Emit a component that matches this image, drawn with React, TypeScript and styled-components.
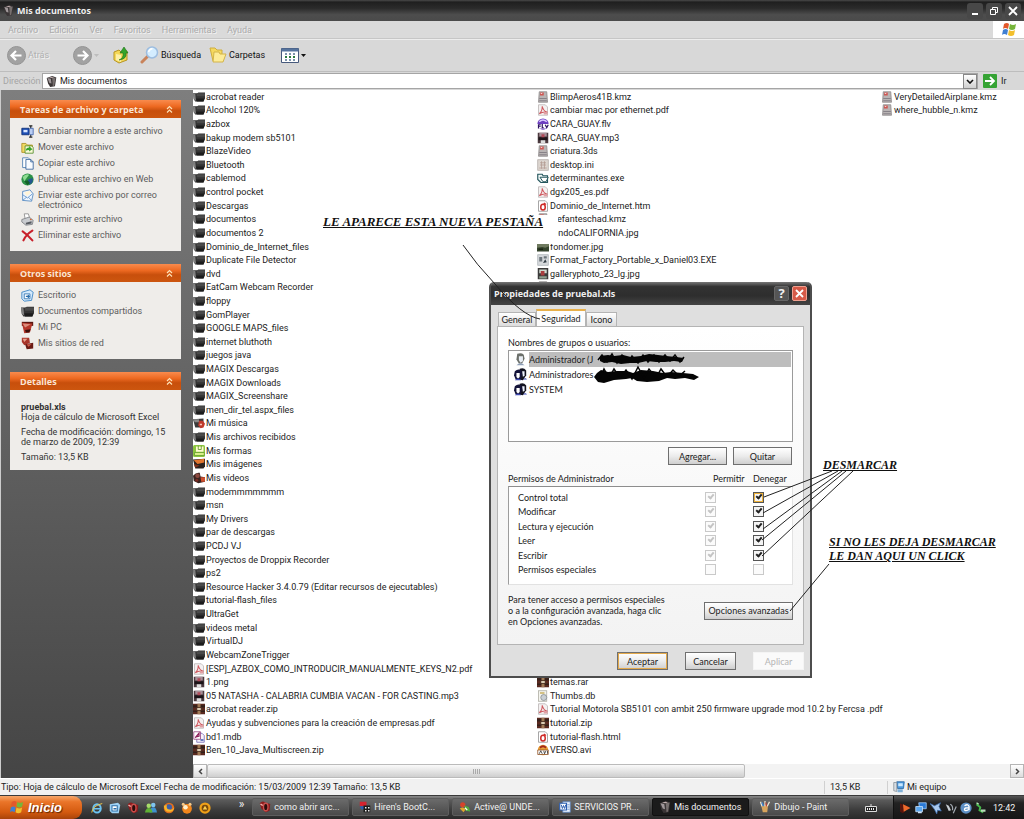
import React from 'react';
import styled, { createGlobalStyle } from 'styled-components';

const GlobalStyle = createGlobalStyle`
  *, *::before, *::after { box-sizing: border-box; }
  html, body { margin: 0; padding: 0; }
  body { font-family: Roboto, "Liberation Sans", sans-serif; font-size: 9px; color: #222; background: #fff; overflow: hidden; }
  button, input { font: inherit; color: inherit; margin: 0; padding: 0; border: 0; background: none; }
  ul { list-style: none; margin: 0; padding: 0; }
  h1, h2, p { margin: 0; font-size: inherit; }
  a { color: inherit; text-decoration: none; }
  svg { display: block; flex: none; }
`;

/* ---------- icons ---------- */

const Ico = styled.svg<{ $s: number }>`
  width: ${(p) => p.$s}px;
  height: ${(p) => p.$s}px;
`;

type IconName = keyof typeof shapes;

const shapes = {
  folder: (
    <>
      <path d="M0 3h6l1-1h9v8l-2 4H3L1 11z" fill="#343434" />
      <path d="M0 3l3 1 1 9-3-2z" fill="#808080" />
      <path d="M5 3h11v4H5z" fill="#4a4a4a" />
      <path d="M4 10h11l-1 4H5z" fill="#1c1c1c" />
    </>
  ),
  music: (
    <>
      <path d="M0 3l14-1v9l-2 3H3z" fill="#3b3b3b" />
      <path d="M1 3h7v4H2z" fill="#8a8a8a" />
      <path d="M8 5l5 0 3 4-2 5-4 1-3-4z" fill="#c0392b" />
      <path d="M9 9h3v2H9z" fill="#f2c4b8" />
    </>
  ),
  shapesDoc: (
    <>
      <rect x="0" y="0" width="16" height="16" rx="2" fill="#8cc63f" />
      <path d="M4 2h10v7H4z" fill="#fffbd0" />
      <path d="M7 1v5h4V1" stroke="#4c8a1d" fill="none" />
      <path d="M2 10h13v4H2z" fill="#d9ee8a" stroke="#5d9b28" />
    </>
  ),
  images: (
    <>
      <path d="M0 2l16-1v10l-2 3H3z" fill="#2b2320" />
      <path d="M1 3l14-2v5L6 8z" fill="#e2762f" />
      <path d="M1 8l8 2-6 3z" fill="#803018" />
    </>
  ),
  videos: (
    <>
      <path d="M0 5q4-5 9-4l1 5 6 1v6l-9 2-6-3z" fill="#3a2320" />
      <circle cx="6" cy="5" r="3" fill="#8d4a40" />
      <path d="M10 7h6v6h-5z" fill="#d0502f" />
      <circle cx="5" cy="11" r="2" fill="#7b2b22" />
    </>
  ),
  pdf: (
    <>
      <path d="M2 1h9l3 3v11H2z" fill="#f4f1f1" stroke="#b5b0b0" />
      <path d="M3 13c4-3 4-8 4-10 1 5 3 7 7 8-4-1-8 0-11 2z" fill="none" stroke="#cf5a60" strokeWidth="1.4" />
      <path d="M9 11h5v3H9z" fill="#e0a0a4" />
    </>
  ),
  media: (
    <>
      <rect x="1" y="1" width="14" height="14" fill="#4b3a3f" />
      <path d="M3 1h10v5H3z" fill="#a58f97" />
      <path d="M2 7h12v4H2z" fill="#1c1418" />
      <path d="M5 11h6v4H5z" fill="#ddd" />
      <path d="M6 3h4v4H6z" fill="#b04a58" />
    </>
  ),
  zip: (
    <>
      <rect x="0" y="1" width="16" height="14" fill="#5a2a20" />
      <path d="M0 3h16v3H0zM0 10h16v2H0z" fill="#33201a" />
      <path d="M6 1h4v14H6z" fill="#a07a56" />
      <path d="M5 6h6v4H5z" fill="#dccdb4" stroke="#3a1d12" />
    </>
  ),
  mdb: (
    <>
      <path d="M5 3h7l3 3v9H5z" fill="#f6f2fb" stroke="#6a5dae" />
      <path d="M1 1h9v10H1z" fill="#fff" stroke="#8c3a78" />
      <path d="M3 9l5-6v4q-3 1-4 0" stroke="#8b1e5a" strokeWidth="1.6" fill="none" />
      <path d="M10 12h4" stroke="#3a53a8" strokeWidth="2" />
    </>
  ),
  kmz: (
    <>
      <path d="M3 1h10l1 14H2z" fill="#b9b4b4" stroke="#8a8585" />
      <path d="M4 2h5v4H4z" fill="#cf5652" />
      <path d="M5 3h2v1H5z" fill="#fff" />
      <path d="M3 10h10M3 13h10" stroke="#77727a" />
    </>
  ),
  flv: (
    <>
      <circle cx="8" cy="8" r="7.5" fill="#6d3fc0" />
      <path d="M3 5q5-5 10 0" stroke="#d9c8ff" strokeWidth="2" fill="none" />
      <path d="M0 8h16v6H0z" fill="#fff" />
      <path d="M2 14V9h3M2 11h3M7 8v5h2M11 9l2 4 2-4" stroke="#2b1060" strokeWidth="1.6" fill="none" />
    </>
  ),
  ini: (
    <>
      <rect x="1" y="1" width="14" height="14" fill="#ddd6d0" stroke="#b0a9a4" />
      <path d="M4 5h8M4 8h8M3 12h10M6 3v10M10 3v10" stroke="#b29a90" />
    </>
  ),
  exe: (
    <>
      <path d="M1 3h6l1 2h6v9H5L1 10z" fill="#eef6f5" stroke="#23555c" strokeWidth="1.5" />
      <path d="M4 7h11l-3 6H8z" fill="#fff" stroke="#23555c" strokeWidth="1.3" />
    </>
  ),
  htm: (
    <>
      <path d="M2 1h9l3 3v11H2z" fill="#fff" stroke="#8a8a8a" />
      <ellipse cx="8" cy="9.500" rx="3" ry="3.800" fill="none" stroke="#cf2a27" strokeWidth="2" />
      <path d="M9 4l3 2" stroke="#cf2a27" strokeWidth="2" />
    </>
  ),
  photo: (
    <>
      <rect x="0" y="4" width="16" height="10" fill="#34432c" />
      <path d="M0 4h16v3l-5 2-4-1-7 1z" fill="#6f7a5f" />
      <path d="M2 10h6v2H2z" fill="#1a2414" />
    </>
  ),
  setup: (
    <>
      <rect x="1" y="1" width="14" height="14" fill="#d6d9dc" stroke="#aab0b4" />
      <path d="M3 4h4v6H3zM9 3h4v3H9z" fill="#6c757b" />
      <path d="M8 12l3-5 2 4z" fill="#2f3b43" />
    </>
  ),
  gallery: (
    <>
      <rect x="1" y="0" width="14" height="15" fill="#3b3a3a" />
      <path d="M3 2h10v5H3z" fill="#cfd9cf" />
      <path d="M5 4h5v6H5z" fill="#a93d3d" />
      <path d="M3 11h10v3H3z" fill="#8fa08f" />
    </>
  ),
  db: (
    <>
      <rect x="2" y="1" width="11" height="14" fill="#f4f4ee" stroke="#aaa99f" />
      <circle cx="9" cy="10" r="4" fill="#c9cfd4" stroke="#81888d" />
      <path d="M4 4h6" stroke="#c9b060" strokeWidth="2" />
    </>
  ),
  avi: (
    <>
      <circle cx="8" cy="8" r="7" fill="#e9a13a" />
      <path d="M1 8h14v6H1z" fill="#fff" stroke="#8b4a17" />
      <path d="M4 5q4-4 8 0" stroke="#a3271a" strokeWidth="2.4" fill="none" />
      <path d="M3 13l2-4 2 4M9 9l1 4 2-4M14 9v4" stroke="#222" fill="none" />
    </>
  ),
  rename: (
    <>
      <path d="M1 4h9v8H1z" fill="#1d4fb5" stroke="#0b2b74" />
      <path d="M3 6h5v3H3z" fill="#d9e6ff" />
      <path d="M12 1v14M10 1h4M10 15h4" stroke="#222" strokeWidth="1.4" />
      <path d="M11 4h4v8h-4" fill="#b9cdf3" stroke="#3a5fa8" />
    </>
  ),
  move: (
    <>
      <path d="M1 3h5l2 2h6v9H1z" fill="#f1d965" stroke="#a98c1e" />
      <path d="M5 6h8l2 2v7H5z" fill="#fbf9d8" stroke="#4d8a26" />
      <path d="M6 12q0-4 4-4V6l4 4-4 3v-2q-3 0-4 1z" fill="#36a52c" />
    </>
  ),
  copy: (
    <>
      <path d="M2 1h7l2 2v10H2z" fill="#fff" stroke="#4477ae" />
      <path d="M6 3h6l3 3v9H6z" fill="#f8fbff" stroke="#2b5d96" />
      <path d="M12 3v3h3" fill="none" stroke="#2b5d96" />
    </>
  ),
  globe: (
    <>
      <circle cx="8" cy="8" r="7.500" fill="#2c9147" />
      <path d="M2 5q4-5 8-3l-3 4-3 4z" fill="#8fdc92" />
      <path d="M9 8l5-2q2 5-3 8l-3-2z" fill="#23568f" />
      <path d="M4 10l4-1 3 3-3 3z" fill="#136028" />
    </>
  ),
  mail: (
    <>
      <path d="M2 3l9-2 4 5-2 9-11-1z" fill="#eef6ff" stroke="#4b82bd" />
      <path d="M2 7l6 4 6-5M2 14l5-4M13 14l-4-4" fill="none" stroke="#5b8fc7" />
      <path d="M4 4l7-2 1 3-5 4z" fill="#fff4d8" />
    </>
  ),
  printer: (
    <>
      <path d="M4 1h5l2 6H5z" fill="#fff" stroke="#888" />
      <path d="M1 8l9-3 5 4-1 5-8 1-5-4z" fill="#c9ccd0" stroke="#7b7e83" />
      <path d="M6 12l7-2v3l-7 1z" fill="#565a60" />
      <path d="M11 8h2" stroke="#d9632a" strokeWidth="1.5" />
    </>
  ),
  del: <path d="M2 3q6 4 12 11M14 2Q6 7 3 14" stroke="#c8202b" strokeWidth="2.6" fill="none" strokeLinecap="round" />,
  desktop: (
    <>
      <path d="M1 4l10-3 4 3-2 10-9 1-3-3z" fill="#d5eafc" stroke="#2f7cc0" />
      <path d="M4 6h7v6H4z" fill="#fff" stroke="#2a6fae" />
      <path d="M6 9h5M9 7v4" stroke="#2a6fae" strokeWidth="1.5" />
    </>
  ),
  pc: (
    <>
      <path d="M1 1h14v5H1z" fill="#5b1712" />
      <path d="M1 2l13 1-3 11-7 1z" fill="#b4362a" />
      <path d="M2 3l10 1-7 4z" fill="#dc8d7c" />
      <path d="M5 11l7-1-2 4H6z" fill="#3a0f0b" />
    </>
  ),
  net: (
    <>
      <path d="M1 1h9l1 6-7 3-3-4z" fill="#a8352a" />
      <path d="M2 2h6l-4 4z" fill="#e6a18f" />
      <path d="M5 9l10-2v7l-8 1z" fill="#6a1b15" />
      <path d="M7 9l6 0-4 3z" fill="#cf5a4a" />
    </>
  ),
  bin: (
    <>
      <path d="M1 3l8-3 6 2-2 13-7 1-3-5z" fill="#3a3536" />
      <path d="M2 3l5 1 1 7-3-1z" fill="#a0989a" />
      <path d="M9 3l5-1-2 12-2 1z" fill="#77706f" />
      <path d="M4 2l5-1 3 1-4 1z" fill="#c3b1b0" />
    </>
  ),
  ie: (
    <>
      <ellipse cx="8" cy="8.500" rx="5" ry="5.500" fill="none" stroke="#6cc3f2" strokeWidth="2.6" />
      <path d="M4 9h8" stroke="#6cc3f2" strokeWidth="2" />
      <path d="M1 14Q2 5 15 2" stroke="#f0c94a" strokeWidth="1.3" fill="none" />
    </>
  ),
  showDesk: (
    <>
      <path d="M1 3l11-2 3 3-2 11-9 0-3-3z" fill="#9fd2f5" />
      <path d="M4 5h7v7H4z" fill="#fff" stroke="#2b6ea8" strokeWidth="1.4" />
      <path d="M6 9h4" stroke="#2b6ea8" strokeWidth="2" />
    </>
  ),
  opera: (
    <>
      <path d="M1 3q4-4 7-1l7 2-1 9-5 2-6-5z" fill="#8e1a1c" />
      <ellipse cx="9" cy="8" rx="3" ry="5" fill="#2a0c0c" stroke="#c9504c" strokeWidth="1.8" />
      <path d="M2 4l3 2" stroke="#f0b4ae" strokeWidth="2" />
    </>
  ),
  msn: (
    <>
      <circle cx="11" cy="4" r="3" fill="#7fc4ee" />
      <path d="M6 14q1-7 5-7t5 7z" fill="#3f91cf" />
      <circle cx="5" cy="5" r="3" fill="#a8dc6a" />
      <path d="M0 14q1-6 5-6t5 6z" fill="#5fb134" />
    </>
  ),
  firefox: (
    <>
      <circle cx="8" cy="8" r="7" fill="#e2701c" />
      <circle cx="8" cy="7" r="4" fill="#3c5fa8" />
      <path d="M1 5q1 9 8 8 5 0 6-6-2 4-6 3-5 0-4-6z" fill="#f7b52b" />
    </>
  ),
  gom: (
    <>
      <circle cx="8" cy="9" r="6.500" fill="#f2861c" />
      <circle cx="3" cy="3" r="2" fill="#f7c987" />
      <circle cx="12" cy="3" r="2" fill="#f7c987" />
      <circle cx="6" cy="7" r="3" fill="#fff0cf" />
    </>
  ),
  aimp: (
    <>
      <circle cx="8" cy="8" r="7.500" fill="#f0a018" />
      <circle cx="8" cy="8" r="4.500" fill="#7a4a0c" />
      <path d="M5 10l3-5 3 5z" fill="#ffcf4d" />
    </>
  ),
  hiren: (
    <>
      <path d="M1 1h9v6H1z" fill="#d3232f" />
      <path d="M1 7h6l3 4H3z" fill="#2a5fae" />
      <path d="M6 6h9v9H6z" fill="#1b1b1b" />
      <path d="M8 8h2v2H8zM12 8h2v2h-2zM8 12h2v2H8zM12 12h2v2h-2z" fill="#eee" />
    </>
  ),
  active: (
    <>
      <circle cx="5" cy="5" r="3.500" fill="#d5432b" />
      <path d="M1 10q5-3 8 1l-3 4z" fill="#e0a52c" />
      <path d="M7 6l6 2 2 6-6-1z" fill="#4fae3b" />
      <path d="M8 9l3 3" stroke="#fff" strokeWidth="1.5" />
    </>
  ),
  word: (
    <>
      <path d="M5 1h10v14H5z" fill="#e9f1fc" stroke="#5a86c6" />
      <path d="M1 3h9v9H1z" fill="#fff" stroke="#2a5db0" strokeWidth="1.5" />
      <path d="M3 5l1.500 5L6 6l1.500 4L9 5" fill="none" stroke="#2a5db0" strokeWidth="1.300" />
      <path d="M11 5h3M11 8h3M11 11h3" stroke="#5a86c6" />
    </>
  ),
  paint: (
    <>
      <path d="M3 6l9 0-1 9H5z" fill="#d8a45c" />
      <path d="M4 7L2 1M8 7V0M11 7l3-6" stroke="#e8e2d0" strokeWidth="1.800" />
      <path d="M4 2l2 5" stroke="#3f83d0" strokeWidth="2" />
      <path d="M9 2l1 5" stroke="#cf3b2c" strokeWidth="1.500" />
    </>
  ),
  myPc: (
    <>
      <path d="M5 1h10l-1 9H6z" fill="#4d9be0" stroke="#21609e" />
      <path d="M7 3h6v4H7z" fill="#cbe8ff" />
      <path d="M1 2h4v12l-4-1z" fill="#d7dde2" stroke="#838c94" />
      <path d="M6 11h7v4H6z" fill="#7fb0d8" />
    </>
  ),
  trayPlay: (
    <>
      <path d="M0 2l12 4-8 9-4-2z" fill="#57150d" />
      <path d="M4 3l10 5-9 5z" fill="#ee6a2c" />
    </>
  ),
  trayNet: (
    <>
      <path d="M5 1h10v8H6z" fill="#2b7ad6" stroke="#a8d4ff" />
      <path d="M1 6h9v7H1z" fill="#5aa7ef" stroke="#cfe7ff" />
      <path d="M4 14h5" stroke="#cfe7ff" strokeWidth="2" />
    </>
  ),
  trayMoon: <path d="M0 2l6 3 8-4-2 5 3 6-5-1-1 5-3-6z" fill="#a9c9ef" stroke="#3b6aa8" />,
  traySound: (
    <>
      <path d="M1 3l4 2 3 6-3 1z" fill="#c7ccd1" />
      <path d="M7 3q4 2 3 8M11 15l4-9" fill="none" stroke="#a4abb3" strokeWidth="1.600" />
    </>
  ),
  trayAvast: (
    <>
      <circle cx="8" cy="8" r="7.500" fill="#5d8fc4" />
      <path d="M6 5q5-3 6 1v5M12 8q-6-1-6 2t6 0" fill="none" stroke="#fff" strokeWidth="1.800" />
    </>
  ),
  trayPlug: (
    <>
      <path d="M2 3l5 4-1 4 5 3" fill="none" stroke="#45b649" strokeWidth="2.600" />
      <path d="M8 10h6v3H8z" fill="#b8dcba" />
      <path d="M2 1l3 2" stroke="#b6e8b7" strokeWidth="2" />
    </>
  ),
  userOne: (
    <>
      <path d="M4 1q5-2 8 1l1 5-3 6H6L3 8z" fill="#6b6f6a" />
      <path d="M6 4h5v6l-3 2-2-3z" fill="#e9eef5" />
      <path d="M3 15q5-5 10 0z" fill="#8fa0b8" />
    </>
  ),
  userMany: (
    <>
      <path d="M7 1q5-2 8 2l0 6-4 6-5-1z" fill="#13131f" />
      <path d="M10 4h3v5l-2 2z" fill="#eef2ff" />
      <path d="M1 4q4-4 8-1l1 5-2 6H2L0 9z" fill="#14143a" />
      <path d="M3 6h4v5l-2 2-2-2z" fill="#fff" />
      <path d="M1 15q4-4 8 0zM11 14q3-3 5 0z" fill="#3b47b0" />
    </>
  ),
};

function Icon({ name, size = 12 }: { name: IconName; size?: number }) {
  return (
    <Ico $s={size} viewBox="0 0 16 16" aria-hidden="true">
      {shapes[name]}
    </Ico>
  );
}

const Flag = ({ size }: { size: number }) => (
  <Ico $s={size} viewBox="0 0 16 16" aria-hidden="true">
    <path d="M3 2q3-2 5 0L7 7Q4 5 2 7z" fill="#e2582b" />
    <path d="M9 2q3 2 6 0l-1 5q-3 2-6 0z" fill="#76b53a" />
    <path d="M2 8q3-2 5 0l-1 5q-3-2-5 0z" fill="#3f7fd2" />
    <path d="M8 8q3 2 6 0l-1 5q-3 2-6 0z" fill="#f3bf2c" />
  </Ico>
);

const Up = () => (
  <svg width="7" height="8" viewBox="0 0 7 8" aria-hidden="true">
    <path d="M1 4l2.500-2.500L6 4M1 7.500L3.500 5 6 7.500" fill="none" stroke="#ffe3b8" strokeWidth="1.200" />
  </svg>
);

/* ---------- page frame ---------- */

const Screen = styled.div`
  position: relative;
  display: flex;
  flex-direction: column;
  height: 100vh;
`;

const TitleBar = styled.header`
  display: flex;
  align-items: center;
  gap: 3px;
  height: 21px;
  flex: none;
  padding: 0 3px 0 3px;
  color: #eee;
  font: bold 9px "Open Sans", sans-serif;
  background: linear-gradient(#4a4a4a 0, #1f1f1f 10%, #2b2b2b 40%, #4d4d4d 70%, #4a4a4a 100%);
`;

const TitleText = styled.h1`
  flex: 1;
`;

const CaptionButton = styled.button`
  width: 16px;
  height: 16px;
  display: grid;
  place-items: center;
  border-radius: 3px;
  background: #484848;
`;

const CaptionGroup = styled.div`
  display: flex;
  gap: 3px;
`;

const MenuBar = styled.nav`
  display: flex;
  align-items: stretch;
  height: 18px;
  flex: none;
  background: #dadada;
  border-bottom: 1px solid #c6c6c6;
`;

const MenuItems = styled.div`
  display: flex;
  flex: 1;
  gap: 11px;
  padding-left: 8px;
`;

const MenuButton = styled.button`
  color: #ababab;
  text-shadow: 1px 1px 0 #f2f2f2;
`;

const FlagBox = styled.div`
  width: 31px;
  display: grid;
  place-items: center;
  background: #fff;
`;

const ToolBar = styled.div`
  display: flex;
  align-items: center;
  height: 32px;
  flex: none;
  padding: 0 0 1px 7px;
  background: #d8d8d8;
  border-top: 1px solid #ededed;
`;

const ToolButton = styled.button<{ $w: number; $off?: boolean }>`
  display: flex;
  align-items: center;
  gap: 2px;
  width: ${(p) => p.$w}px;
  white-space: nowrap;
  color: ${(p) => (p.$off ? '#b0b0b0' : '#111')};
  text-shadow: ${(p) => (p.$off ? '1px 1px 0 #f2f2f2' : 'none')};
`;

const AddressBar = styled.div`
  display: flex;
  align-items: stretch;
  height: 19px;
  flex: none;
  padding: 1px 0;
  background: #d8d8d8;
  border-top: 1px solid #bdbdbd;
`;

const AddressLabel = styled.label`
  display: flex;
  align-items: center;
  width: 42px;
  padding-left: 3px;
  color: #a5a5a5;
`;

const AddressField = styled.div`
  display: flex;
  flex: 1;
  align-items: center;
  gap: 3px;
  padding-left: 3px;
  background: #fff;
  border: 1px solid #a5a5a5;
`;

const AddressInput = styled.input`
  flex: 1;
  min-width: 0;
  outline: 0;
`;

const DropButton = styled.button`
  display: grid;
  place-items: center;
  width: 14px;
  height: 15px;
  border: 1px solid #888;
  background: linear-gradient(#fff, #cfcfcf);
`;

const GoButton = styled.button`
  display: flex;
  align-items: center;
  gap: 4px;
  width: 46px;
  padding-left: 5px;
`;

/* ---------- sidebar ---------- */

const Body = styled.div`
  display: flex;
  flex: 1;
  min-height: 0;
`;

const SideBar = styled.aside`
  width: 193px;
  flex: none;
  display: flex;
  flex-direction: column;
  gap: 13px;
  padding: 10px 12px 0 9px;
  border-left: 1px solid #ccc;
  background: linear-gradient(#7e7e7e, #666 40%, #454545);
`;

const PanelHead = styled.h2`
  display: flex;
  align-items: center;
  justify-content: space-between;
  height: 18px;
  padding: 0 8px 0 10px;
  color: #fbe6d4;
  font: bold 9px "Open Sans", sans-serif;
  background: linear-gradient(#f98b4d, #ee6a22 35%, #c84f0c 60%, #cc560f);
`;

const PanelToggle = styled.button`
  display: grid;
  place-items: center;
`;

const PanelBody = styled.div<{ $details?: boolean }>`
  display: flex;
  flex-direction: column;
  gap: ${(p) => (p.$details ? 5 : 3)}px;
  padding: ${(p) => (p.$details ? '12px 14px 8px 11px' : '7px 14px 9px 11px')};
  background: #efedea;
  line-height: 10px;
  color: ${(p) => (p.$details ? '#333' : '#5c5c5c')};
`;

const TaskLink = styled.a`
  display: flex;
  align-items: flex-start;
  gap: 4px;
  min-height: 13px;
`;

const TaskText = styled.span`
  padding-top: 1px;
`;

const tasks: [IconName, string][] = [
  ['rename', 'Cambiar nombre a este archivo'],
  ['move', 'Mover este archivo'],
  ['copy', 'Copiar este archivo'],
  ['globe', 'Publicar este archivo en Web'],
  ['mail', 'Enviar este archivo por correo electrónico'],
  ['printer', 'Imprimir este archivo'],
  ['del', 'Eliminar este archivo'],
];

const places: [IconName, string][] = [
  ['desktop', 'Escritorio'],
  ['folder', 'Documentos compartidos'],
  ['pc', 'Mi PC'],
  ['net', 'Mis sitios de red'],
];

function Panel({ title, details, children }: { title: string; details?: boolean; children: React.ReactNode }) {
  return (
    <section>
      <PanelHead>
        {title}
        <PanelToggle aria-label={`Contraer ${title}`}>
          <Up />
        </PanelToggle>
      </PanelHead>
      <PanelBody $details={details}>{children}</PanelBody>
    </section>
  );
}

const LinkList = ({ items }: { items: [IconName, string][] }) => (
  <>
    {items.map(([icon, label]) => (
      <TaskLink href="#" key={label}>
        <Icon name={icon} size={13} />
        <TaskText>{label}</TaskText>
      </TaskLink>
    ))}
  </>
);

/* ---------- file list ---------- */

const Pane = styled.main`
  display: flex;
  flex-direction: column;
  flex: 1;
  min-width: 0;
  background: #fff;
`;

const FileGrid = styled.ul`
  flex: 1;
  min-height: 0;
  display: grid;
  grid-template-rows: repeat(49, minmax(0, 1fr));
  grid-template-columns: repeat(3, 344px);
  padding-bottom: 7px;
  overflow: hidden;
`;

const FileItem = styled.li<{ $col: number; $row: number }>`
  grid-column: ${(p) => p.$col};
  grid-row: ${(p) => p.$row};
  display: flex;
  align-items: center;
  gap: 1px;
  white-space: nowrap;
`;

type Entry = [IconName, string];
const folders = (names: string[]): Entry[] => names.map((n) => ['folder', n]);

const columnOne: Entry[] = [
  ...folders([
    'acrobat reader', 'Alcohol 120%', 'azbox', 'bakup modem sb5101', 'BlazeVideo', 'Bluetooth', 'cablemod',
    'control pocket', 'Descargas', 'documentos', 'documentos 2', 'Dominio_de_Internet_files',
    'Duplicate File Detector', 'dvd', 'EatCam Webcam Recorder', 'floppy', 'GomPlayer', 'GOOGLE MAPS_files',
    'internet bluthoth', 'juegos java', 'MAGIX Descargas', 'MAGIX Downloads', 'MAGIX_Screenshare',
    'men_dir_tel.aspx_files',
  ]),
  ['music', 'Mi música'],
  ['folder', 'Mis archivos recibidos'],
  ['shapesDoc', 'Mis formas'],
  ['images', 'Mis imágenes'],
  ['videos', 'Mis vídeos'],
  ...folders([
    'modemmmmmmm', 'msn', 'My Drivers', 'par de descargas', 'PCDJ VJ', 'Proyectos de Droppix Recorder', 'ps2',
    'Resource Hacker 3.4.0.79 (Editar recursos de ejecutables)', 'tutorial-flash_files', 'UltraGet',
    'videos metal', 'VirtualDJ', 'WebcamZoneTrigger',
  ]),
  ['pdf', '[ESP]_AZBOX_COMO_INTRODUCIR_MANUALMENTE_KEYS_N2.pdf'],
  ['media', '1.png'],
  ['media', '05 NATASHA - CALABRIA CUMBIA VACAN - FOR CASTING.mp3'],
  ['zip', 'acrobat reader.zip'],
  ['pdf', 'Ayudas y subvenciones para la creación de empresas.pdf'],
  ['mdb', 'bd1.mdb'],
  ['zip', 'Ben_10_Java_Multiscreen.zip'],
];

const columnTwo: Entry[] = [
  ['kmz', 'BlimpAeros41B.kmz'],
  ['pdf', 'cambiar mac por ethernet.pdf'],
  ['flv', 'CARA_GUAY.flv'],
  ['media', 'CARA_GUAY.mp3'],
  ['kmz', 'criatura.3ds'],
  ['ini', 'desktop.ini'],
  ['exe', 'determinantes.exe'],
  ['pdf', 'dgx205_es.pdf'],
  ['htm', 'Dominio_de_Internet.htm'],
  ['kmz', 'elefanteschad.kmz'],
  ['photo', 'fondoCALIFORNIA.jpg'],
  ['photo', 'fondomer.jpg'],
  ['setup', 'Format_Factory_Portable_x_Daniel03.EXE'],
  ['gallery', 'galleryphoto_23_lg.jpg'],
];

const columnTwoEnd: Entry[] = [
  ['zip', 'temas.rar'],
  ['db', 'Thumbs.db'],
  ['pdf', 'Tutorial Motorola SB5101 con ambit 250 firmware upgrade mod 10.2 by Fercsa  .pdf'],
  ['zip', 'tutorial.zip'],
  ['htm', 'tutorial-flash.html'],
  ['avi', 'VERSO.avi'],
];

const columnThree: Entry[] = [
  ['kmz', 'VeryDetailedAirplane.kmz'],
  ['kmz', 'where_hubble_n.kmz'],
];

const Files = ({ col, from = 1, items }: { col: number; from?: number; items: Entry[] }) => (
  <>
    {items.map(([icon, name], i) => (
      <FileItem key={name} $col={col} $row={from + i}>
        <Icon name={icon} />
        {name}
      </FileItem>
    ))}
  </>
);

const ScrollBar = styled.div`
  display: flex;
  height: 14px;
  flex: none;
  background: #f3f3f3;
`;

const ScrollButton = styled.button`
  display: grid;
  place-items: center;
  width: 14px;
  border: 1px solid #b5b5b5;
  background: linear-gradient(#fff, #dcdcdc);
`;

const ScrollTrack = styled.div`
  flex: 1;
`;

const ScrollThumb = styled.div`
  display: grid;
  place-items: center;
  width: 67%;
  height: 14px;
  border: 1px solid #bbb;
  border-radius: 2px;
  background: linear-gradient(#fafafa, #cfcfcf);
`;

const StatusBar = styled.footer`
  display: flex;
  align-items: center;
  height: 17px;
  flex: none;
  background: #f1f1f1;
  border-top: 1px solid #fff;
`;

const StatusCell = styled.div<{ $w?: number }>`
  display: flex;
  align-items: center;
  gap: 2px;
  height: 13px;
  padding-left: ${(p) => (p.$w ? 5 : 1)}px;
  width: ${(p) => (p.$w ? `${p.$w}px` : 'auto')};
  flex: ${(p) => (p.$w ? 'none' : '1')};
  border-left: ${(p) => (p.$w ? '1px solid #d0d0d0' : '0')};
`;

/* ---------- taskbar ---------- */

const TaskBar = styled.div`
  display: flex;
  height: 24px;
  flex: none;
  color: #f2f2f2;
  border-top: 1px solid #3a3a3a;
  background: linear-gradient(#8a8a8a, #5a5a5a 18%, #3c3c3c 60%, #2a2a2a);
`;

const StartButton = styled.button`
  display: flex;
  align-items: center;
  gap: 4px;
  width: 83px;
  padding-left: 9px;
  color: #fff;
  font: italic bold 13px "Liberation Sans", sans-serif;
  text-shadow: 1px 1px 1px #5d2503;
  border-radius: 0 9px 9px 0;
  background: linear-gradient(#f7a76a, #ea7529 25%, #d45a10 70%, #a8430a);
`;

const QuickLaunch = styled.div`
  display: flex;
  align-items: center;
  gap: 6px;
  width: 171px;
  padding-left: 9px;
`;

const QuickButton = styled.button`
  display: block;
`;

const More = styled.button`
  margin: 0 8px 8px auto;
  font-size: 12px;
  line-height: 10px;
`;

const Tasks = styled.div`
  display: flex;
  flex: 1;
  gap: 3px;
  padding: 2px 0 3px;
`;

const TaskButton = styled.button<{ $active?: boolean }>`
  display: flex;
  align-items: center;
  gap: 3px;
  width: 97px;
  padding-left: 6px;
  border-radius: 2px;
  white-space: nowrap;
  border: 1px solid ${(p) => (p.$active ? '#111' : '#5e5e5e')};
  background: ${(p) => (p.$active ? '#1b1b1b' : 'linear-gradient(#6b6b6b, #4a4a4a)')};
`;

const Keyboard = styled.button`
  display: grid;
  place-items: center;
  width: 44px;
`;

const Tray = styled.div`
  display: flex;
  align-items: center;
  gap: 3px;
  width: 132px;
  padding-left: 6px;
  border-left: 1px solid #111;
  background: linear-gradient(#555, #222 30%, #161616);
`;

const Clock = styled.time`
  margin-left: 3px;
`;

/* ---------- properties dialog ---------- */

const Dialog = styled.section`
  position: absolute;
  left: 489px;
  top: 282px;
  width: 323px;
  color: #222;
  font: 9px Lato, "Liberation Sans", sans-serif;
  border: 2px solid #4d4d4d;
  border-top: 0;
  border-radius: 5px 5px 0 0;
  background: #dfdfdf;
`;

const DialogTitle = styled.header`
  display: flex;
  align-items: center;
  gap: 3px;
  height: 23px;
  padding: 0 3px;
  color: #f0f0f0;
  font: bold 9px "Open Sans", sans-serif;
  border-radius: 4px 4px 0 0;
  background: linear-gradient(#777, #333 20%, #2e2e2e 60%, #444);
`;

const DialogButton = styled.button<{ $close?: boolean }>`
  display: grid;
  place-items: center;
  width: 15px;
  height: 15px;
  border-radius: 2px;
  font-size: 13px;
  line-height: 13px;
  border: 1px solid ${(p) => (p.$close ? '#f0a090' : '#666')};
  background: ${(p) => (p.$close ? '#d65a48' : '#555')};
`;

const Tabs = styled.div`
  display: flex;
  align-items: flex-end;
  height: 21px;
  padding-left: 7px;
`;

const Tab = styled.button<{ $on?: boolean; $w: number }>`
  width: ${(p) => p.$w}px;
  height: ${(p) => (p.$on ? 17 : 14)}px;
  border: 1px solid #b4b4b4;
  border-bottom: 0;
  border-top: ${(p) => (p.$on ? '2px solid #e8b04a' : '1px solid #b4b4b4')};
  background: ${(p) => (p.$on ? '#fdfdfd' : 'linear-gradient(#fff, #dcdcdc)')};
`;

const TabPanel = styled.div`
  margin: 0 6px;
  height: 319px;
  padding: 9px 10px 0;
  border: 1px solid #b4b4b4;
  background: linear-gradient(#fff, #f3f3f3);
`;

const FieldLabel = styled.p`
  height: 14px;
  line-height: 13px;
`;

const UserList = styled.ul`
  height: 92px;
  padding: 1px;
  border: 1px solid #9a9a9a;
  background: #fff;
`;

const UserRow = styled.li`
  display: flex;
  align-items: center;
  height: 15px;
  padding-left: 4px;
  gap: 2px;
`;

const UserName = styled.span<{ $on?: boolean }>`
  flex: 1;
  line-height: 15px;
  background: ${(p) => (p.$on ? '#bdbdbd' : 'none')};
`;

const ButtonRow = styled.div<{ $gap: number }>`
  display: flex;
  justify-content: flex-end;
  gap: ${(p) => p.$gap}px;
  padding: 5px 1px 7px;
`;

const PushButton = styled.button<{ $w: number; $look?: 'default' | 'off' }>`
  width: ${(p) => p.$w}px;
  height: 18px;
  flex: none;
  white-space: nowrap;
  color: ${(p) => (p.$look === 'off' ? '#b5b5b5' : '#222')};
  border: 1px solid ${(p) => (p.$look === 'off' ? '#f4f4f4' : '#6f6f6f')};
  box-shadow: ${(p) => (p.$look === 'default' ? 'inset 0 0 0 1px #e3a94b' : 'none')};
  background: ${(p) => (p.$look === 'off' ? '#fafafa' : 'linear-gradient(#fff, #ececec 50%, #cfcfcf)')};
`;

const PermHeader = styled.div`
  display: grid;
  grid-template-columns: 1fr 40px 40px;
  line-height: 14px;
`;

const PermBox = styled.div`
  height: 99px;
  padding: 3px 9px 0;
  border: 1px solid #e2e2e2;
  border-top-color: #8d8d8d;
  border-left-color: #9d9d9d;
  background: #fff;
`;

const PermTable = styled.table`
  width: 100%;
  height: 87px;
  border-collapse: collapse;
  td, th { padding: 0; text-align: left; font-weight: normal; }
  td { width: 48px; }
  td:last-child { width: 30px; }
  td input { display: block; }
`;

const Check = styled.input<{ $hot?: boolean }>`
  appearance: none;
  position: relative;
  width: 11px;
  height: 11px;
  border: 1px solid #555;
  background: #f4f4f4;
  box-shadow: ${(p) => (p.$hot ? 'inset 0 0 0 1px #f0b43c' : 'none')};
  &:disabled { border-color: #c9c9c9; background: #fbfbfb; }
  &:checked::after {
    content: '';
    position: absolute;
    left: 3px;
    top: 0;
    width: 4px;
    height: 6px;
    border: solid #222;
    border-width: 0 2px 2px 0;
    transform: rotate(40deg);
  }
  &:checked:disabled::after { border-color: #c4c4c4; }
`;

const Advanced = styled.div`
  display: flex;
  align-items: center;
  justify-content: space-between;
  padding-top: 9px;
  line-height: 11px;
  p { width: 162px; }
`;

const Footer = styled.div`
  display: flex;
  justify-content: flex-end;
  gap: 17px;
  padding: 7px 6px 6px;
`;

const Scribble = styled.svg`
  position: absolute;
  left: 77px;
  top: 1px;
  pointer-events: none;
`;

const Users = styled.div`
  position: relative;
`;

const perms = ['Control total', 'Modificar', 'Lectura y ejecución', 'Leer', 'Escribir', 'Permisos especiales'];

function PropertiesDialog() {
  return (
    <Dialog role="dialog" aria-label="Propiedades de pruebal.xls">
      <DialogTitle>
        <TitleText as="h2">Propiedades de pruebal.xls</TitleText>
        <DialogButton aria-label="Ayuda">?</DialogButton>
        <DialogButton $close aria-label="Cerrar">
          <svg width="9" height="9" viewBox="0 0 9 9">
            <path d="M1 1l7 7M8 1L1 8" stroke="#fff" strokeWidth="1.800" />
          </svg>
        </DialogButton>
      </DialogTitle>
      <Tabs>
        <Tab $w={38}>General</Tab>
        <Tab $w={50} $on>Seguridad</Tab>
        <Tab $w={31}>Icono</Tab>
      </Tabs>
      <TabPanel>
        <FieldLabel>Nombres de grupos o usuarios:</FieldLabel>
        <Users>
          <UserList>
            <UserRow>
              <Icon name="userOne" size={13} />
              <UserName $on>Administrador (J</UserName>
            </UserRow>
            <UserRow>
              <Icon name="userMany" size={13} />
              <UserName>Administradores</UserName>
            </UserRow>
            <UserRow>
              <Icon name="userMany" size={13} />
              <UserName>SYSTEM</UserName>
            </UserRow>
          </UserList>
          <Scribble width="120" height="32" viewBox="0 0 120 32">
            <path
              d="M15 5l8-1 6 1 9-1 8 2 10-1 8-2 9 1 8 1 10 1 8 1-2 4-8-1-9 1-9 0-9-1-9 2-8 0-9 1-9-2-8 1-4-2z"
              fill="#050505"
            />
            <path d="M12 22l4-3 7 2 9-1 10 0 6 2 8-3 12 1 10 2 8-1 12 1 10 1 6 3-5 3-9-2-10 1-8-1-8 3-12 1-10-1-5-3-6 1-12 1-10 3-6-1-4-5z" fill="#050505" />
            <path d="M13 9l4-5 5 7 5-8 5 9 5-8 6 7 4-6 6 7 5-8 5 7 6-7 5 7 6-7 5 6 5-6 5 7 4-5M15 27l4-9 5 9 5-9 6 9 6-8 6 9 6-12 6 11 5-9 7 9 5-9 6 8 6-7 6 6 6-5" fill="none" stroke="#050505" strokeWidth="1.500" />
          </Scribble>
        </Users>
        <ButtonRow $gap={6}>
          <PushButton $w={59}>Agregar...</PushButton>
          <PushButton $w={59}>Quitar</PushButton>
        </ButtonRow>
        <PermHeader>
          <span>Permisos de Administrador</span>
          <span>Permitir</span>
          <span>Denegar</span>
        </PermHeader>
        <PermBox>
          <PermTable>
            <tbody>
              {perms.map((name, i) => {
                const last = i === perms.length - 1;
                return (
                  <tr key={name}>
                    <th scope="row">{name}</th>
                    <td>
                      <Check type="checkbox" disabled defaultChecked={!last} aria-label={`Permitir ${name}`} />
                    </td>
                    <td>
                      <Check type="checkbox" disabled={last} $hot={i === 0} defaultChecked={!last} aria-label={`Denegar ${name}`} />
                    </td>
                  </tr>
                );
              })}
            </tbody>
          </PermTable>
        </PermBox>
        <Advanced>
          <p>Para tener acceso a permisos especiales o a la configuración avanzada, haga clic en Opciones avanzadas.</p>
          <PushButton $w={89}>Opciones avanzadas</PushButton>
        </Advanced>
      </TabPanel>
      <Footer>
        <PushButton $w={51} $look="default">Aceptar</PushButton>
        <PushButton $w={51}>Cancelar</PushButton>
        <PushButton $w={51} $look="off" disabled>Aplicar</PushButton>
      </Footer>
    </Dialog>
  );
}

/* ---------- notes laid over the windows ---------- */

const Note = styled.p<{ $x: number; $y: number; $w: number; $h?: number; $big?: boolean }>`
  position: absolute;
  left: ${(p) => p.$x}px;
  top: ${(p) => p.$y}px;
  width: ${(p) => p.$w}px;
  height: ${(p) => (p.$h ? `${p.$h}px` : 'auto')};
  background: #fff;
  color: #111;
  font: italic bold ${(p) => (p.$big ? 13 : 12)}px/14px "Liberation Serif", serif;
  text-decoration: underline;
  white-space: pre-line;
`;

const Pointers = styled.svg`
  position: absolute;
  left: 0;
  top: 0;
  pointer-events: none;
`;

export default function App() {
  return (
    <Screen>
      <GlobalStyle />
      <TitleBar>
        <Icon name="bin" size={11} />
        <TitleText>Mis documentos</TitleText>
        <CaptionGroup>
          <CaptionButton aria-label="Minimizar">
            <svg width="10" height="10" viewBox="0 0 10 10"><path d="M2 8h6" stroke="#fff" strokeWidth="2" /></svg>
          </CaptionButton>
          <CaptionButton aria-label="Restaurar">
            <svg width="10" height="10" viewBox="0 0 10 10">
              <path d="M3.500 3V1.500h5v5H7M1.500 3.500h5v5h-5z" fill="none" stroke="#fff" />
            </svg>
          </CaptionButton>
          <CaptionButton aria-label="Cerrar">
            <svg width="10" height="10" viewBox="0 0 10 10"><path d="M1 1l8 8M9 1L1 9" stroke="#fff" strokeWidth="1.800" /></svg>
          </CaptionButton>
        </CaptionGroup>
      </TitleBar>
      <MenuBar>
        <MenuItems>
          {['Archivo', 'Edición', 'Ver', 'Favoritos', 'Herramientas', 'Ayuda'].map((m) => (
            <MenuButton key={m}>{m}</MenuButton>
          ))}
        </MenuItems>
        <FlagBox><Flag size={16} /></FlagBox>
      </MenuBar>
      <ToolBar>
        <ToolButton $w={66} $off>
          <svg width="19" height="19" viewBox="0 0 19 19">
            <circle cx="9.500" cy="9.500" r="9" fill="#a2a2a2" stroke="#949494" />
            <path d="M14.500 9.500H5M9 5L4.500 9.500 9 14" fill="none" stroke="#fff" strokeWidth="2.200" />
          </svg>
          Atrás
        </ToolButton>
        <ToolButton $w={40} $off aria-label="Adelante">
          <svg width="19" height="19" viewBox="0 0 19 19">
            <circle cx="9.500" cy="9.500" r="9" fill="#a2a2a2" stroke="#949494" />
            <path d="M4.500 9.500H14M10 5l4.500 4.500L10 14" fill="none" stroke="#fff" strokeWidth="2.200" />
          </svg>
          <svg width="5" height="3" viewBox="0 0 5 3"><path d="M0 0h5L2.500 3z" fill="#bdbdbd" /></svg>
        </ToolButton>
        <ToolButton $w={27} aria-label="Arriba">
          <svg width="16" height="18" viewBox="0 0 16 18">
            <path d="M1 6l5-2 2 2 6-1v9l-8 3-5-3z" fill="#f5d858" stroke="#b79522" />
            <path d="M3 8l5 1v7l-5-2z" fill="#fdf0a8" />
            <path d="M6 14q5-2 4-7H7l4-6 4 6h-2q1 6-7 7z" fill="#35a52b" stroke="#1b6f16" strokeWidth=".6" />
          </svg>
        </ToolButton>
        <ToolButton $w={69}>
          <svg width="19" height="18" viewBox="0 0 19 18">
            <path d="M2 16l6-6" stroke="#c9835a" strokeWidth="3" strokeLinecap="round" />
            <circle cx="12" cy="6.500" r="5.500" fill="#d4edff" stroke="#9dbde0" strokeWidth="1.500" />
            <path d="M8.500 6q1-3 4-3.500" stroke="#fff" strokeWidth="1.500" fill="none" />
          </svg>
          Búsqueda
        </ToolButton>
        <ToolButton $w={72}>
          <svg width="18" height="16" viewBox="0 0 18 16">
            <path d="M1 1h5l2 2h5v9l-9 2z" fill="#f5d95f" stroke="#cfae3e" />
            <path d="M5 5h5l1 2h6l-3 8H4z" fill="#fdec98" stroke="#d3b44a" />
          </svg>
          Carpetas
        </ToolButton>
        <ToolButton $w={26} aria-label="Vistas">
          <svg width="18" height="15" viewBox="0 0 18 15">
            <path d="M.5.5h17v14H.5z" fill="#fff" stroke="#46597c" />
            <path d="M.5.5h17v3H.5z" fill="#56749e" />
            <path d="M4 6h2M8 6h2M12 6h2M4 12h2M8 12h2M12 12h2" stroke="#7d93ab" strokeWidth="2" />
            <path d="M4 9h2M8 9h2M12 9h2" stroke="#2b7a3d" strokeWidth="2" />
          </svg>
          <svg width="5" height="3" viewBox="0 0 5 3"><path d="M0 0h5L2.500 3z" fill="#111" /></svg>
        </ToolButton>
      </ToolBar>
      <AddressBar>
        <AddressLabel htmlFor="address">Dirección</AddressLabel>
        <AddressField>
          <Icon name="bin" size={11} />
          <AddressInput id="address" defaultValue="Mis documentos" />
          <DropButton aria-label="Mostrar direcciones">
            <svg width="8" height="5" viewBox="0 0 8 5"><path d="M1 1l3 3 3-3" fill="none" stroke="#111" strokeWidth="1.600" /></svg>
          </DropButton>
        </AddressField>
        <GoButton>
          <svg width="14" height="14" viewBox="0 0 14 14">
            <rect width="14" height="14" rx="1" fill="#35a334" />
            <path d="M2 7h9M7 3l4 4-4 4" fill="none" stroke="#fff" strokeWidth="1.800" />
          </svg>
          Ir
        </GoButton>
      </AddressBar>
      <Body>
        <SideBar>
          <Panel title="Tareas de archivo y carpeta"><LinkList items={tasks} /></Panel>
          <Panel title="Otros sitios"><LinkList items={places} /></Panel>
          <Panel title="Detalles" details>
            <p><b>pruebal.xls</b><br />Hoja de cálculo de Microsoft Excel</p>
            <p>Fecha de modificación: domingo, 15 de marzo de 2009, 12:39</p>
            <p>Tamaño: 13,5 KB</p>
          </Panel>
        </SideBar>
        <Pane>
          <FileGrid>
            <Files col={1} items={columnOne} />
            <Files col={2} items={columnTwo} />
            <FileItem $col={2} $row={15}><Icon name="kmz" /></FileItem>
            <Files col={2} from={44} items={columnTwoEnd} />
            <Files col={3} items={columnThree} />
          </FileGrid>
          <ScrollBar>
            <ScrollButton aria-label="Desplazar a la izquierda">
              <svg width="5" height="7" viewBox="0 0 5 7"><path d="M4 1L1.500 3.500 4 6" fill="none" stroke="#444" strokeWidth="1.500" /></svg>
            </ScrollButton>
            <ScrollTrack>
              <ScrollThumb>
                <svg width="7" height="5" viewBox="0 0 7 5"><path d="M.5 0v5M2.500 0v5M4.500 0v5M6.500 0v5" stroke="#aaa" /></svg>
              </ScrollThumb>
            </ScrollTrack>
            <ScrollButton aria-label="Desplazar a la derecha">
              <svg width="5" height="7" viewBox="0 0 5 7"><path d="M1 1l2.500 2.500L1 6" fill="none" stroke="#444" strokeWidth="1.500" /></svg>
            </ScrollButton>
          </ScrollBar>
        </Pane>
      </Body>
      <StatusBar>
        <StatusCell>Tipo: Hoja de cálculo de Microsoft Excel Fecha de modificación: 15/03/2009 12:39 Tamaño: 13,5 KB</StatusCell>
        <StatusCell $w={63}>13,5 KB</StatusCell>
        <StatusCell $w={137}><Icon name="myPc" size={12} />Mi equipo</StatusCell>
      </StatusBar>
      <TaskBar>
        <StartButton><Flag size={15} />Inicio</StartButton>
        <QuickLaunch>
          {(['ie', 'showDesk', 'opera', 'msn', 'firefox', 'gom', 'aimp'] as IconName[]).map((n) => (
            <QuickButton key={n} aria-label={n}><Icon name={n} size={12} /></QuickButton>
          ))}
          <More aria-label="Más">»</More>
        </QuickLaunch>
        <Tasks>
          <TaskButton><Icon name="opera" />como abrir arc...</TaskButton>
          <TaskButton><Icon name="hiren" />Hiren's BootC...</TaskButton>
          <TaskButton><Icon name="active" />Active@ UNDE...</TaskButton>
          <TaskButton><Icon name="word" />SERVICIOS PR...</TaskButton>
          <TaskButton $active><Icon name="bin" />Mis documentos</TaskButton>
          <TaskButton><Icon name="paint" />Dibujo - Paint</TaskButton>
        </Tasks>
        <Keyboard aria-label="Teclado">
          <svg width="12" height="8" viewBox="0 0 12 8">
            <path d="M.5 2.500h11v5H.5z" fill="#222" stroke="#ddd" />
            <path d="M2 5h8" stroke="#eee" strokeDasharray="1 1" strokeWidth="2" />
            <path d="M6 2V0" stroke="#ddd" />
          </svg>
        </Keyboard>
        <Tray>
          {(['trayPlay', 'trayNet', 'trayMoon', 'traySound', 'trayAvast', 'trayPlug'] as IconName[]).map((n) => (
            <Icon key={n} name={n} size={12} />
          ))}
          <Clock>12:42</Clock>
        </Tray>
      </TaskBar>
      <PropertiesDialog />
      <Note $x={323} $y={215} $w={235} $h={29} $big>LE APARECE ESTA NUEVA PESTAÑA</Note>
      <Note $x={823} $y={458} $w={80}>DESMARCAR</Note>
      <Note $x={829} $y={535} $w={180}>{'SI NO LES DEJA DESMARCAR\nLE DAN AQUI UN CLICK'}</Note>
      <Pointers width="1024" height="819" viewBox="0 0 1024 819" aria-hidden="true">
        <g fill="none" stroke="#222" strokeWidth="1">
          <path d="M463 245Q476 264 495 284Q522 316 540 319" />
          <path d="M764 497L832 471M763 513L838 471M763 529L842 471M762 540L846 471M762 556L853 471" />
          <path d="M790 611L829 564" />
        </g>
      </Pointers>
    </Screen>
  );
}
